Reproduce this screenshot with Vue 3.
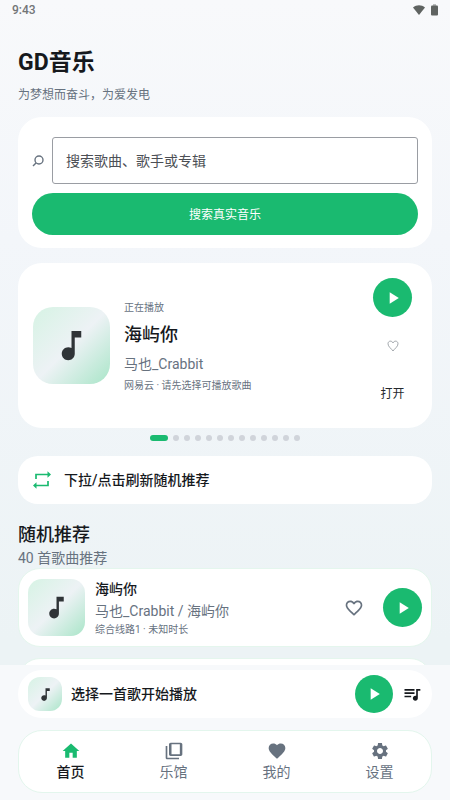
<script setup>
import { ref } from 'vue'

const icons = {
  note: 'M12 3v10.55c-.59-.34-1.27-.55-2-.55-2.21 0-4 1.79-4 4s1.79 4 4 4 4-1.79 4-4V7h4V3h-6z',
  play: 'M8 5v14l11-7z',
  heart: 'M12 21.35l-1.45-1.32C5.4 15.36 2 12.28 2 8.5 2 5.42 4.42 3 7.5 3c1.74 0 3.41.81 4.5 2.09C13.09 3.81 14.76 3 16.5 3 19.58 3 22 5.42 22 8.5c0 3.78-3.4 6.86-8.55 11.54L12 21.35z',
  heartLine: 'M16.5 3c-1.74 0-3.41.81-4.5 2.09C10.91 3.81 9.24 3 7.5 3 4.42 3 2 5.42 2 8.5c0 3.78 3.4 6.86 8.55 11.54L12 21.35l1.45-1.32C18.6 15.36 22 12.28 22 8.5 22 5.42 19.58 3 16.5 3zm-4.4 15.55l-.1.1-.1-.1C7.14 14.24 4 11.39 4 8.5 4 6.5 5.5 5 7.5 5c1.54 0 3.04.99 3.57 2.36h1.87C13.46 5.99 14.96 5 16.5 5c2 0 3.5 1.5 3.5 3.5 0 2.89-3.14 5.74-7.9 10.05z',
  queue: 'M15 6H3v2h12V6zm0 4H3v2h12v-2zM3 16h8v-2H3v2zM17 6v8.18c-.31-.11-.65-.18-1-.18-1.66 0-3 1.34-3 3s1.34 3 3 3 3-1.34 3-3V8h3V6h-5z',
  home: 'M10 20v-6h4v6h5v-8h3L12 3 2 12h3v8z',
  library: 'M4 6H2v14c0 1.1.9 2 2 2h14v-2H4V6zM20 2H8c-1.1 0-2 .9-2 2v12c0 1.1.9 2 2 2h12c1.1 0 2-.9 2-2V4c0-1.1-.9-2-2-2zm-1 14H9V4h10v12z',
  gear: 'M19.14 12.94c.04-.3.06-.61.06-.94 0-.32-.02-.64-.07-.94l2.03-1.58c.18-.14.23-.41.12-.61l-1.92-3.32c-.12-.22-.37-.29-.59-.22l-2.39.96c-.5-.38-1.03-.7-1.62-.94l-.36-2.54c-.04-.24-.24-.41-.48-.41h-3.84c-.24 0-.43.17-.47.41l-.36 2.54c-.59.24-1.13.57-1.62.94l-2.39-.96c-.22-.08-.47 0-.59.22L2.74 8.87c-.12.21-.08.47.12.61l2.03 1.58c-.05.3-.09.63-.09.94s.02.64.07.94l-2.03 1.58c-.18.14-.23.41-.12.61l1.92 3.32c.12.22.37.29.59.22l2.39-.96c.5.38 1.03.7 1.62.94l.36 2.54c.05.24.24.41.48.41h3.84c.24 0 .44-.17.47-.41l.36-2.54c.59-.24 1.13-.56 1.62-.94l2.39.96c.22.08.47 0 .59-.22l1.92-3.32c.12-.22.07-.47-.12-.61l-2.01-1.58zM12 15.6c-1.98 0-3.6-1.62-3.6-3.6s1.62-3.6 3.6-3.6 3.6 1.62 3.6 3.6-1.62 3.6-3.6 3.6z',
}

const keyword = ref('')
const slide = ref(0)
const slides = 13
const tab = ref('首页')
const tabs = [
  { name: '首页', icon: icons.home },
  { name: '乐馆', icon: icons.library },
  { name: '我的', icon: icons.heart },
  { name: '设置', icon: icons.gear },
]
const songs = [
  { id: 1, title: '海屿你', artist: '马也_Crabbit / 海屿你', source: '综合线路1 · 未知时长' },
]
</script>

<template>
  <div class="app">
    <main class="scroll">
      <div class="status">
        <span>9:43</span>
        <span class="status-icons">
          <svg width="12" height="10" viewBox="0 0 12 10"><path d="M0 2.500C3.500-.6 8.500-.6 12 2.500L6 10z" /></svg>
          <svg width="7" height="12" viewBox="0 0 7 12"><path d="M2 0h3v2H2z" opacity=".4" /><rect y="1.500" width="7" height="10" rx="1" /></svg>
        </span>
      </div>

      <header class="head">
        <h1>GD音乐</h1>
        <p>为梦想而奋斗，为爱发电</p>
      </header>

      <form class="card search" @submit.prevent>
        <div class="search-row">
          <label for="keyword" aria-label="搜索">
            <svg width="12" height="12" viewBox="0 0 12 12"><circle cx="7" cy="5" r="4" /><path d="M4 8L1 11" /></svg>
          </label>
          <input id="keyword" v-model="keyword" type="text" placeholder="搜索歌曲、歌手或专辑" />
        </div>
        <button class="primary" type="submit">搜索真实音乐</button>
      </form>

      <section class="card player">
        <span class="cover large"><svg viewBox="0 0 24 24"><path :d="icons.note" /></svg></span>
        <div class="info">
          <span class="small">正在播放</span>
          <h2>海屿你</h2>
          <span class="artist">马也_Crabbit</span>
          <span class="small">网易云 · 请先选择可播放歌曲</span>
        </div>
        <div class="actions">
          <button class="play" type="button" aria-label="播放"><svg viewBox="0 0 24 24"><path :d="icons.play" /></svg></button>
          <button class="plain like" type="button" aria-label="收藏">
            <svg width="12" height="12" viewBox="0 0 12 12"><path d="M6 11C4.500 8.700 1 6.700 1 3.800 1 .5 5 .3 6 3 7 .3 11 .5 11 3.800 11 6.700 7.500 8.700 6 11z" /></svg>
          </button>
          <button class="plain open" type="button">打开</button>
        </div>
      </section>

      <div class="dots">
        <i v-for="n in slides" :key="n" :class="{ on: n - 1 === slide }"></i>
      </div>

      <button class="card refresh" type="button">
        <svg width="20" height="20" viewBox="0 0 20 20">
          <path class="line" d="M4 9V4.500H16M16 11V15.500H4" />
          <path d="M15.500 1.300L19 4.500 15.500 7.700zM4.500 12.300L1 15.500 4.500 18.700z" />
        </svg>
        <span>下拉/点击刷新随机推荐</span>
      </button>

      <div class="section-head">
        <h2>随机推荐</h2>
        <p>40 首歌曲推荐</p>
      </div>

      <ul class="songs">
        <li v-for="song in songs" :key="song.id" class="song">
          <span class="cover medium"><svg viewBox="0 0 24 24"><path :d="icons.note" /></svg></span>
          <div class="info">
            <h3>{{ song.title }}</h3>
            <span class="artist">{{ song.artist }}</span>
            <span class="small">{{ song.source }}</span>
          </div>
          <button class="plain fav" type="button" aria-label="收藏"><svg viewBox="0 0 24 24"><path :d="icons.heartLine" /></svg></button>
          <button class="play" type="button" aria-label="播放"><svg viewBox="0 0 24 24"><path :d="icons.play" /></svg></button>
        </li>
        <li class="song" aria-hidden="true"></li>
      </ul>
    </main>

    <footer class="bottom">
      <div class="mini">
        <span class="cover tiny"><svg viewBox="0 0 24 24"><path :d="icons.note" /></svg></span>
        <strong>选择一首歌开始播放</strong>
        <button class="play" type="button" aria-label="播放"><svg viewBox="0 0 24 24"><path :d="icons.play" /></svg></button>
        <button class="plain queue" type="button" aria-label="播放列表"><svg viewBox="0 0 24 24"><path :d="icons.queue" /></svg></button>
      </div>
      <nav class="tabs">
        <button v-for="t in tabs" :key="t.name" type="button" :class="{ active: t.name === tab }" @click="tab = t.name">
          <svg viewBox="0 0 24 24"><path :d="t.icon" /></svg>
          <span>{{ t.name }}</span>
        </button>
      </nav>
    </footer>
  </div>
</template>

<style>
body {
  margin: 0;
}
</style>

<style scoped>
* {
  box-sizing: border-box;
}
.app {
  display: flex;
  flex-direction: column;
  height: 100vh;
  background: linear-gradient(#f8f9fb, #f3f6fa 30%, #ecf3f5 80%);
  color: #16191d;
  font-family: Roboto, "Noto Sans CJK SC", sans-serif;
  font-size: 14px;
  line-height: 20px;
}
h1, h2, h3, p, ul {
  margin: 0;
  padding: 0;
}
button {
  border: 0;
  padding: 0;
  background: none;
  font: inherit;
  color: inherit;
  cursor: pointer;
}
svg {
  display: block;
  fill: currentColor;
}
.scroll {
  flex: 1;
  min-height: 0;
  overflow-y: auto;
  scrollbar-width: none;
  padding: 0 18px;
}
.status {
  display: flex;
  justify-content: space-between;
  align-items: center;
  height: 20px;
  margin: 0 -6px;
  font-size: 12px;
  font-weight: 500;
  color: #727577;
}
.status-icons {
  display: flex;
  align-items: center;
  gap: 6px;
  color: #5f6361;
}
.head {
  padding: 26px 0 12px;
}
.head h1 {
  font-size: 23px;
  line-height: 34px;
  font-weight: 700;
}
.head p {
  margin-top: 5px;
  font-size: 12px;
  color: #67727f;
}
.card {
  background: #fff;
  border-radius: 24px;
}
.search {
  padding: 20px 14px 13px;
  margin-bottom: 15px;
}
.search-row {
  display: flex;
  align-items: center;
  gap: 8px;
  margin-bottom: 9px;
}
.search-row svg {
  fill: none;
  stroke: #67727f;
  stroke-width: 1.4;
}
.search-row input {
  flex: 1;
  min-width: 0;
  height: 47px;
  padding: 1px 13px 0;
  border: 1px solid #9a9da3;
  border-radius: 3px;
  background: #fff;
  font: inherit;
  color: #16191d;
}
.search-row input::placeholder {
  color: #4c4f55;
  opacity: 1;
}
.primary {
  display: block;
  width: 100%;
  height: 42px;
  padding-top: 2px;
  border-radius: 21px;
  background: #1aba70;
  color: #fff;
  font-size: 12px;
}
.player {
  display: flex;
  align-items: center;
  gap: 14px;
  padding: 15px;
}
.player .info {
  padding-top: 2px;
}
.cover {
  display: grid;
  place-items: center;
  flex: none;
  background: linear-gradient(135deg, #d6f3e4, #edf2f5 50%, #a9e5c8);
  color: #2f3437;
}
.large {
  width: 77px;
  height: 77px;
  border-radius: 20px;
}
.large svg {
  width: 39px;
}
.medium {
  width: 57px;
  height: 57px;
  border-radius: 14px;
}
.medium svg {
  width: 29px;
}
.tiny {
  width: 34px;
  height: 34px;
  border-radius: 12px;
}
.tiny svg {
  width: 17px;
}
.info {
  display: flex;
  flex-direction: column;
  flex: 1;
  min-width: 0;
}
.small {
  font-size: 10px;
  color: #67727f;
}
.artist {
  color: #67727f;
}
.player h2 {
  font-size: 18px;
  line-height: 34px;
  font-weight: 500;
}
.player .artist {
  line-height: 24px;
}
.actions {
  display: flex;
  flex-direction: column;
  align-items: center;
  gap: 5px;
  margin-right: 5px;
}
.play {
  display: grid;
  place-items: center;
  flex: none;
  width: 39px;
  height: 39px;
  border-radius: 50%;
  background: #1aba70;
  color: #fff;
}
.play svg {
  width: 20px;
}
.actions .plain {
  display: grid;
  place-items: center;
}
.actions .like {
  height: 48px;
}
.like svg {
  fill: none;
  stroke: #a3a8ad;
  stroke-width: 1;
}
.actions .open {
  height: 38px;
  font-size: 12px;
  color: #25292d;
}
.dots {
  display: flex;
  justify-content: center;
  gap: 5px;
  padding: 7px 0 15px;
}
.dots i {
  width: 6px;
  height: 6px;
  border-radius: 3px;
  background: #d0d4da;
}
.dots .on {
  width: 18px;
  background: #1aba70;
}
.refresh {
  display: flex;
  align-items: center;
  gap: 12px;
  width: 100%;
  height: 48px;
  padding: 0 14px;
  border-radius: 20px;
  font-weight: 500;
}
.refresh svg {
  color: #1aba70;
}
.refresh .line {
  fill: none;
  stroke: currentColor;
  stroke-width: 1.7;
}
.section-head {
  padding-top: 17px;
}
.section-head h2 {
  font-size: 18px;
  line-height: 27px;
  font-weight: 500;
}
.section-head p {
  line-height: 20px;
  color: #67727f;
}
.songs {
  display: grid;
  gap: 11px;
  list-style: none;
}
.song {
  display: flex;
  align-items: center;
  gap: 10px;
  height: 79px;
  padding: 0 9px;
  border: 1px solid #e4f6ed;
  border-radius: 22px;
  background: #fff;
}
.song h3 {
  font-size: 14px;
  line-height: 22px;
  font-weight: 500;
}
.song .artist {
  line-height: 22px;
}
.song .small {
  line-height: 16px;
}
.fav {
  margin-right: 9px;
  color: #67727f;
}
.fav svg,
.queue svg {
  width: 20px;
}
.bottom {
  flex: none;
  padding: 5px 18px 7px;
  background: #f7f9fb;
}
.mini {
  display: flex;
  align-items: center;
  gap: 9px;
  height: 48px;
  padding: 0 10px;
  border-radius: 24px;
  background: #fff;
}
.mini .play {
  width: 38px;
  height: 38px;
}
.mini strong {
  flex: 1;
  font-weight: 500;
}
.tabs {
  display: grid;
  grid-template-columns: repeat(4, 1fr);
  height: 63px;
  margin-top: 12px;
  border: 1px solid #e3f6ed;
  border-radius: 24px;
  background: #fff;
}
.tabs button {
  display: flex;
  flex-direction: column;
  align-items: center;
  justify-content: center;
  gap: 1px;
  color: #67727f;
}
.tabs svg {
  width: 20px;
}
.tabs .active {
  color: #16191d;
  font-weight: 500;
}
.tabs .active svg {
  color: #1aba70;
}
</style>
